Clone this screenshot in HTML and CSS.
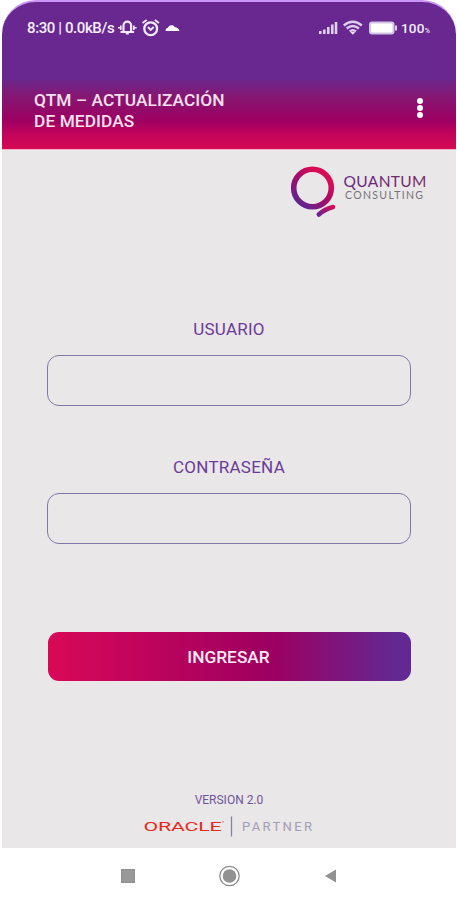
FILE: index.html
```html
<!DOCTYPE html>
<html lang="es">
<head>
    <meta charset="UTF-8">
    <meta name="viewport" content="width=device-width, initial-scale=1.0">
    <title>QTM – Actualización de medidas</title>
    <link rel="stylesheet" href="styles.css">
</head>
<body>
    <div class="phone">
        <header class="header">
            <div class="status-bar">
                <span class="status-text">8:30 | 0.0kB/s</span>
                <svg class="status-left" width="64" height="20" viewBox="0 0 64 20" fill="none" stroke="#f3eaff">
                    <!-- vibrate bell -->
                    <path d="M5.500 14V7.500a3.800 3.800 0 0 1 7.600 0V14M2.500 14h13.600" stroke-width="2.200"/>
                    <path d="M7.800 15.800h3M2.800 7.500v4.500M15.800 7.500v4.500M0 9.700h3M15.600 9.700h3" stroke-width="1.600"/>
                    <!-- alarm clock -->
                    <circle cx="32.700" cy="10.700" r="6.400" stroke-width="2.300"/>
                    <path d="M30 9l2.700 2.800 3-2.800M24.500 5l4.200-3M41 5l-4.200-3" stroke-width="1.900"/>
                    <!-- cloud -->
                    <path d="M47.500 13c0-2.200 1.300-3.300 2.600-3.600C51 6.800 55.500 6.300 57 9.300c2.200.2 4 1.600 4.500 3.700z" fill="#fff" stroke="none"/>
                </svg>
                <svg class="status-right" width="81" height="18" viewBox="0 0 81 18" fill="none" stroke="#ddd0ee">
                    <path d="M3.300 15v-3M7.300 15V10.500M11.300 15V8M15.300 15V5.500M19 15V3" stroke-width="2.600"/>
                    <path d="M26.800 6.500q9-7.500 18 0M29.700 9.500q6-5 12.200 0M32.700 12.400q3-2.500 6.200 0" stroke-width="2.400"/>
                    <path d="M33.300 13h5l-2.500 2.800z" fill="#eee5f8" stroke="none"/>
                    <rect x="53" y="3.500" width="23.500" height="11" rx="2" fill="#fff" stroke="#d3c5e2" stroke-width="2"/>
                    <path d="M79 6.500v5" stroke-width="2"/>
                </svg>
                <span class="battery-text">100<small>%</small></span>
            </div>
            <div class="title-bar">
                <h1>QTM – ACTUALIZACIÓN<br>DE MEDIDAS</h1>
                <div class="menu">
                    <span></span>
                    <span></span>
                    <span></span>
                </div>
            </div>
        </header>

        <main class="content">
            <svg class="logo" width="140" height="56" viewBox="0 0 140 56">
                <defs>
                    <linearGradient id="ring" x1="0.900" y1="0.100" x2="0.150" y2="1">
                        <stop offset="0.150" stop-color="#d80b55"/>
                        <stop offset="0.500" stop-color="#a60b68"/>
                        <stop offset="1" stop-color="#5a2796"/>
                    </linearGradient>
                    <linearGradient id="tail" x1="1" y1="0" x2="0" y2="1">
                        <stop offset="0" stop-color="#d80b55"/>
                        <stop offset="1" stop-color="#6a2496"/>
                    </linearGradient>
                    <linearGradient id="word" x1="0" x2="1">
                        <stop offset="0" stop-color="#662780"/>
                        <stop offset="1" stop-color="#7a2a65"/>
                    </linearGradient>
                </defs>
                <circle cx="24.500" cy="24" r="18.800" fill="none" stroke="url(#ring)" stroke-width="5.600"/>
                <path d="M30.800 50.500Q36 45.500 45 43" fill="none" stroke="url(#tail)" stroke-width="4.600" stroke-linecap="round"/>
                <text class="logo-name" x="55.500" y="23.200" textLength="83" fill="url(#word)">QUANTUM</text>
                <text class="logo-sub" x="57" y="35" textLength="78">CONSULTING</text>
            </svg>

            <form class="login">
                <label for="user">USUARIO</label>
                <input type="text" id="user">
                <label for="password">CONTRASEÑA</label>
                <input type="password" id="password">
                <button type="button">INGRESAR</button>
            </form>

            <footer class="footer">
                <p>VERSION 2.0</p>
                <svg width="172" height="22" viewBox="0 0 172 22">
                    <text class="oracle" transform="translate(1.500 15.300) scale(1.580 1)" textLength="49.500">ORACLE</text>
                    <path d="M80 5.800h2" stroke="#e87a70"/>
                    <path d="M89.500 0.500v20" stroke="#8582a8" stroke-width="1.300"/>
                    <text class="partner" x="100" y="15" textLength="70">PARTNER</text>
                </svg>
            </footer>
        </main>

        <nav class="nav-bar">
            <svg width="216" height="24" viewBox="0 0 216 24">
                <rect x="0.500" y="5.500" width="13" height="13" fill="#999" stroke="#8f8f8f"/>
                <circle cx="108.500" cy="12" r="9.700" fill="none" stroke="#8c8c8c" stroke-width="1.300"/>
                <circle cx="108.500" cy="12" r="6.800" fill="#919191"/>
                <path d="M204 12l11-6.500v13z" fill="#919191"/>
            </svg>
        </nav>
    </div>
</body>
</html>
```

FILE: styles.css
```css
* {
    box-sizing: border-box;
}

body {
    margin: 0;
    background: #fff;
    font-family: Roboto, "Liberation Sans", sans-serif;
}

.phone {
    width: 454px;
    height: 900px;
    margin-left: 2px;
    display: flex;
    flex-direction: column;
}

.header {
    height: 150px;
    border-top: 2px solid #c895f8;
    border-bottom: 1px solid #f4b4c8;
    border-radius: 34px 34px 0 0;
    background: linear-gradient(#68288f 0, #68288f 76px, #851773 94px, #9c0062 118px, #c2045a 132px, #d40a55 147px);
    color: #f6effc;
}

.status-bar {
    height: 51px;
    padding: 0 25px;
    display: flex;
    align-items: center;
}

.status-text {
    width: 87px;
    font-size: 15px;
    font-weight: 500;
    letter-spacing: -0.4px;
    white-space: nowrap;
}

.status-left {
    margin-left: 4px;
}

.status-right {
    margin-left: auto;
}

.battery-text {
    width: 30px;
    margin-left: 3px;
    font-size: 13.5px;
    font-weight: 500;
    letter-spacing: 0.2px;
    white-space: nowrap;
}

.battery-text small {
    font-size: 7px;
}

.title-bar {
    padding: 37px 33px 0 32px;
    display: flex;
    justify-content: space-between;
}

h1 {
    margin: 0;
    font-size: 17.3px;
    line-height: 20.5px;
    font-weight: 500;
    letter-spacing: 0.1px;
    color: #f8e0ec;
}

.menu {
    margin-top: 8px;
    display: flex;
    flex-direction: column;
    gap: 1px;
}

.menu span {
    width: 6px;
    height: 6px;
    border-radius: 50%;
    background: #fff;
}

.content {
    height: 698px;
    background: #e9e7e8;
    display: flex;
    flex-direction: column;
}

.logo {
    margin: 14px 28px 0 auto;
}

.logo-name,
.logo-sub {
    font-family: Lato, sans-serif;
}

.logo-name {
    font-size: 15.5px;
}

.logo-sub {
    font-size: 10.5px;
    fill: #77727a;
}

.login {
    margin: 97px 45px 0;
    display: flex;
    flex-direction: column;
}

label {
    height: 24px;
    margin-bottom: 14px;
    font-size: 17px;
    line-height: 25px;
    letter-spacing: 0.25px;
    text-align: center;
    color: #6b3b98;
}

input {
    height: 51px;
    margin: 0 0 49px;
    padding: 0 14px;
    border: 1.5px solid #8278a8;
    border-radius: 12px;
    background: transparent;
    font: inherit;
}

button {
    height: 49px;
    margin: 39px 0 0 1px;
    padding: 0 2px 0 0;
    border: 0;
    border-radius: 11px;
    background: linear-gradient(90deg, #d90857, #a30060 55%, #9c0062 62%, #622993 97%);
    color: #fbeaf2;
    font: 500 17.3px/51px Roboto, sans-serif;
}

.footer {
    margin: auto 0 10px;
    display: flex;
    flex-direction: column;
    align-items: center;
}

.footer p {
    margin: 0 0 8px;
    font-size: 12px;
    line-height: 16px;
    color: #70539b;
}

.footer svg {
    margin-right: 3px;
}

.oracle {
    font-family: Roboto, sans-serif;
    font-size: 13.5px;
    fill: #e5291f;
}

.partner {
    font-size: 13px;
    fill: #a39db8;
}

.nav-bar {
    flex: 1;
    display: flex;
    align-items: center;
    justify-content: center;
    background: #fff;
}

.nav-bar svg {
    margin-top: 3px;
}
```
